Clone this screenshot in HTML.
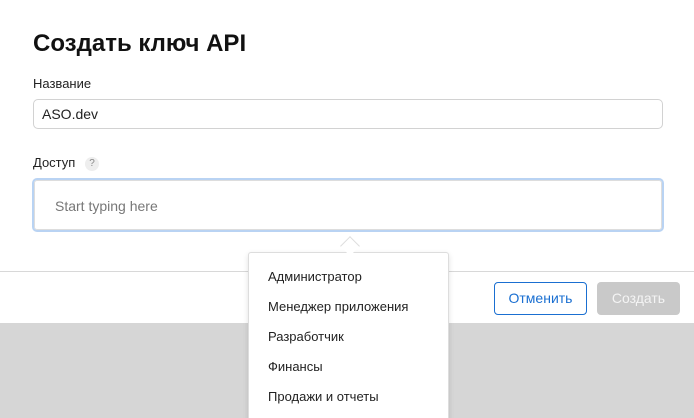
<!DOCTYPE html>
<html><head><meta charset="utf-8"><style>
html,body{margin:0;width:694px;height:418px;overflow:hidden}
body{background:#fff;font-family:"Liberation Sans","Noto Sans CJK SC",sans-serif;position:relative;color:#1d1d1f}
.abs{position:absolute}
</style></head><body>
<div class="abs" style="left:0;top:323px;width:694px;height:95px;background:#d6d6d6"></div>
<div class="abs" style="left:0;top:271px;width:694px;height:1px;background:#d8d8d8"></div>
<div class="abs" style="left:33px;top:30px;font-size:24px;font-weight:bold;color:#111">Создать ключ API</div>
<div class="abs" style="left:33px;top:76px;font-size:13px;color:#222">Название</div>
<div class="abs" style="left:33px;top:99px;width:628px;height:28px;border:1px solid #d2d2d2;border-radius:5px"></div>
<div class="abs" style="left:42px;top:106px;font-size:14px;color:#222">ASO.dev</div>
<div class="abs" style="left:33px;top:155px;font-size:13px;color:#222">Доступ</div>
<div class="abs" style="left:85px;top:157px;width:14px;height:14px;border-radius:7px;background:#eee;color:#888;font-size:10px;text-align:center;line-height:14px">?</div>
<div class="abs" style="left:32px;top:178px;width:628px;height:50px;border:2px solid #b9d3f3;border-radius:5px;box-shadow:inset 0 0 0 1px #ddd"></div>
<div class="abs" style="left:55px;top:198px;font-size:14px;color:#777">Start typing here</div>
<div class="abs" style="left:248px;top:252px;width:199px;height:170px;background:#fff;border:1px solid #ddd;border-radius:3px;box-shadow:0 2px 6px rgba(0,0,0,.12)"></div>
<div class="abs" style="left:343px;top:239px;width:13px;height:13px;background:#fff;border-left:1px solid #ddd;border-top:1px solid #ddd;transform:rotate(45deg)"></div>
<div class="abs" style="left:268px;top:262px;font-size:13px;line-height:30px;color:#222">Администратор<br>Менеджер приложения<br>Разработчик<br>Финансы<br>Продажи и отчеты</div>
<div class="abs" style="left:494px;top:282px;width:91px;height:31px;border:1px solid #1a6fd1;border-radius:4px;color:#1a6fd1;font-size:14px;text-align:center;line-height:31px">Отменить</div>
<div class="abs" style="left:597px;top:282px;width:83px;height:33px;background:#c9c9c9;border-radius:4px;color:#f4f4f4;font-size:14px;text-align:center;line-height:33px">Создать</div>
</body></html>
